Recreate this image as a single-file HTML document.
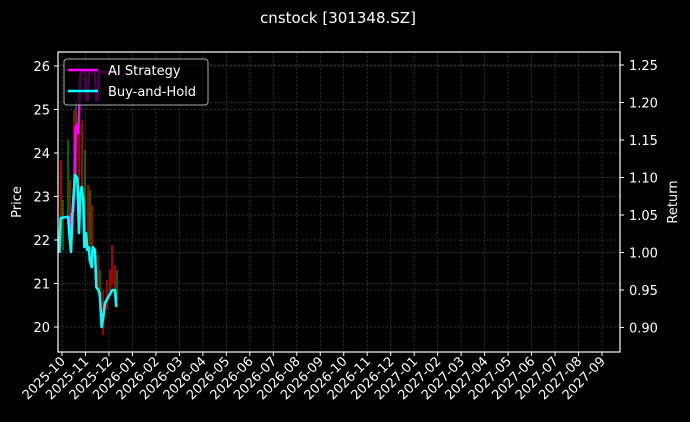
<!DOCTYPE html>
<html><head><meta charset="utf-8"><style>
html,body{margin:0;padding:0;background:#000;}
svg{display:block;font-family:"DejaVu Sans","Liberation Sans",sans-serif;}
</style></head><body>
<svg width="690" height="422" viewBox="0 0 690 422" xmlns="http://www.w3.org/2000/svg">
<rect width="690" height="422" fill="#000"/>
<text x="338" y="23" fill="#fff" font-size="15" text-anchor="middle">cnstock [301348.SZ]</text>
<g stroke="#3c3c3c" stroke-width="0.7" stroke-dasharray="2.5,1.5">
<line x1="58" x2="620" y1="66" y2="66"/><line x1="58" x2="620" y1="109.5" y2="109.5"/><line x1="58" x2="620" y1="153" y2="153"/><line x1="58" x2="620" y1="196.5" y2="196.5"/><line x1="58" x2="620" y1="240" y2="240"/><line x1="58" x2="620" y1="283.5" y2="283.5"/><line x1="58" x2="620" y1="327" y2="327"/>
<line x1="58" x2="620" y1="65" y2="65"/><line x1="58" x2="620" y1="102.5" y2="102.5"/><line x1="58" x2="620" y1="140" y2="140"/><line x1="58" x2="620" y1="177.5" y2="177.5"/><line x1="58" x2="620" y1="215" y2="215"/><line x1="58" x2="620" y1="252.5" y2="252.5"/><line x1="58" x2="620" y1="290" y2="290"/>
</g>
<g id="vg" stroke="#3c3c3c" stroke-width="0.7" stroke-dasharray="2.5,1.5"></g>
<g stroke-width="1.5">
<line x1="61" x2="61" y1="160" y2="235" stroke="#d00"/><line x1="63" x2="63" y1="200" y2="250" stroke="#080"/>
<line x1="68" x2="68" y1="140" y2="220" stroke="#080"/><line x1="70" x2="70" y1="180" y2="240" stroke="#d00"/>
<line x1="74" x2="74" y1="110" y2="200" stroke="#d00"/><line x1="76" x2="76" y1="100" y2="180" stroke="#080"/>
<line x1="79" x2="79" y1="120" y2="220" stroke="#d00"/><line x1="82" x2="82" y1="120" y2="200" stroke="#d00"/>
<line x1="85" x2="85" y1="150" y2="240" stroke="#080"/><line x1="88" x2="88" y1="185" y2="250" stroke="#d00"/>
<line x1="90" x2="90" y1="190" y2="245" stroke="#080"/><line x1="92" x2="92" y1="205" y2="260" stroke="#d00"/>
<line x1="98" x2="98" y1="255" y2="295" stroke="#d00"/><line x1="100" x2="100" y1="270" y2="300" stroke="#080"/>
<line x1="103" x2="103" y1="290" y2="335" stroke="#d00"/><line x1="107" x2="107" y1="280" y2="310" stroke="#d00"/>
<line x1="110" x2="110" y1="270" y2="295" stroke="#d00"/><line x1="112" x2="112" y1="245" y2="285" stroke="#d00"/>
<line x1="115" x2="115" y1="265" y2="295" stroke="#d00"/><line x1="117" x2="117" y1="270" y2="300" stroke="#080"/>
</g>
<polyline fill="none" stroke="#f0f" stroke-width="2.6" stroke-linejoin="round" points="59.3,253 60.7,218 66.7,217 68,217 69.3,233 71,215 73.3,212 75,170 75.7,127 77.3,125 78.3,133 79.3,103 80,80 81,72 85,72 86,100 88,100 89,72 95,72 96,100 98,100 99,72 117,72"/>
<polyline fill="none" stroke="#0ff" stroke-width="2.6" stroke-linejoin="round" points="59.3,253 60.7,218 66.7,217 68.3,217 69.3,233 71,252 72.3,217 73.3,200 75,175 77.3,178 79,233 80.3,193 81.7,187 83.3,200 84.3,247 86,233 87.3,250 89,247 89.7,260 91.7,267 92.7,247 95,250 96.3,287 98.3,290 99.7,293 101.7,327 103.3,317 105,303 108.3,297 112.3,290 115,290 116.3,307"/>
<rect x="58" y="52" width="562" height="300" fill="none" stroke="#fff" stroke-width="1.2"/>
<rect x="64" y="59" width="144" height="46" rx="3" fill="#000" fill-opacity="0.7" stroke="#aaa" stroke-width="1"/>
<line x1="68" x2="98" y1="70" y2="70" stroke="#f0f" stroke-width="2.5"/>
<line x1="68" x2="98" y1="91" y2="91" stroke="#0ff" stroke-width="2.5"/>
<text x="108" y="75" fill="#fff" font-size="13">AI Strategy</text>
<text x="108" y="96" fill="#fff" font-size="13">Buy-and-Hold</text>
<g fill="#fff" font-size="13" text-anchor="end">
<text x="50" y="71">26</text><text x="50" y="114.5">25</text><text x="50" y="158">24</text><text x="50" y="201.5">23</text><text x="50" y="245">22</text><text x="50" y="288.5">21</text><text x="50" y="332">20</text>
</g>
<g stroke="#fff" stroke-width="1">
<line x1="54" x2="58" y1="66" y2="66"/><line x1="54" x2="58" y1="109.5" y2="109.5"/><line x1="54" x2="58" y1="153" y2="153"/><line x1="54" x2="58" y1="196.5" y2="196.5"/><line x1="54" x2="58" y1="240" y2="240"/><line x1="54" x2="58" y1="283.5" y2="283.5"/><line x1="54" x2="58" y1="327" y2="327"/>
<line x1="620" x2="624" y1="65" y2="65"/><line x1="620" x2="624" y1="102.5" y2="102.5"/><line x1="620" x2="624" y1="140" y2="140"/><line x1="620" x2="624" y1="177.5" y2="177.5"/><line x1="620" x2="624" y1="215" y2="215"/><line x1="620" x2="624" y1="252.5" y2="252.5"/><line x1="620" x2="624" y1="290" y2="290"/><line x1="620" x2="624" y1="327.5" y2="327.5"/>
</g>
<text transform="translate(21,202) rotate(-90)" fill="#fff" font-size="13" text-anchor="middle">Price</text>
<g fill="#fff" font-size="13">
<text x="629" y="70">1.25</text><text x="629" y="107.5">1.20</text><text x="629" y="145">1.15</text><text x="629" y="182.5">1.10</text><text x="629" y="220">1.05</text><text x="629" y="257.5">1.00</text><text x="629" y="295">0.95</text><text x="629" y="332.5">0.90</text>
</g>
<text transform="translate(677,202) rotate(-90)" fill="#fff" font-size="13" text-anchor="middle">Return</text>
<g id="xt"></g>
<script>
var names=["2025-10","2025-11","2025-12","2026-01","2026-02","2026-03","2026-04","2026-05","2026-06","2026-07","2026-08","2026-09","2026-10","2026-11","2026-12","2027-01","2027-02","2027-03","2027-04","2027-05","2027-06","2027-07","2027-08","2027-09"];
var ns="http://www.w3.org/2000/svg",xt=document.getElementById("xt"),vg=document.getElementById("vg");
names.forEach(function(n,i){var x=62+i*(540/23);
var l=document.createElementNS(ns,"line");l.setAttribute("x1",x);l.setAttribute("x2",x);l.setAttribute("y1",52);l.setAttribute("y2",352);vg.appendChild(l);
var t=document.createElementNS(ns,"line");t.setAttribute("x1",x);t.setAttribute("x2",x);t.setAttribute("y1",352);t.setAttribute("y2",356);t.setAttribute("stroke","#fff");xt.appendChild(t);
var tx=document.createElementNS(ns,"text");tx.setAttribute("transform","translate("+(x+4)+",362) rotate(-45)");tx.setAttribute("text-anchor","end");tx.setAttribute("fill","#fff");tx.setAttribute("font-size","13");tx.textContent=n;xt.appendChild(tx);});
</script>
</svg>
</body></html>
